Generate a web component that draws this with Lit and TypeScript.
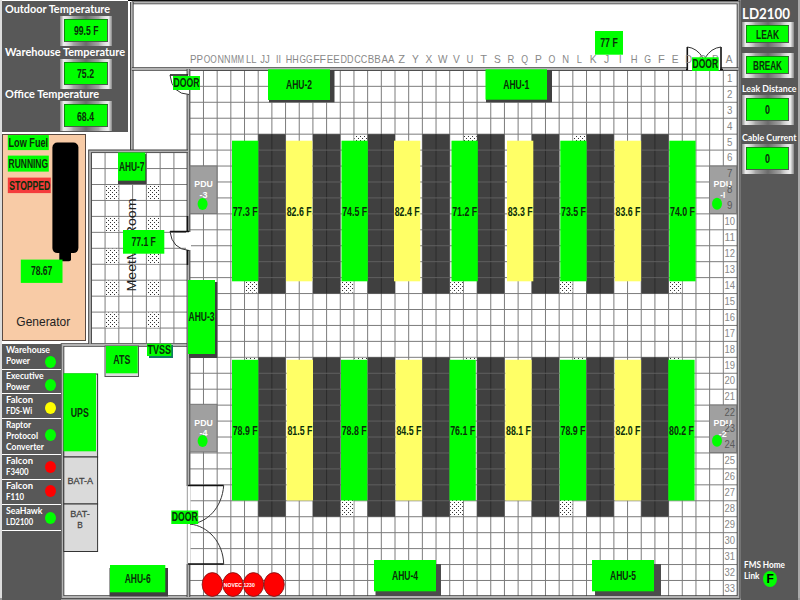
import { LitElement, html, svg, css } from "lit";
import { customElement } from "lit/decorators.js";

const GREEN = "#00ff00";
const YELLOW = "#ffff66";
const DARK = "#404040";

const PX = 13.68;
const PY = 15.94;
const X0 = 189.8;
const Y0 = 70.4;
const gx = (k: number) => X0 + k * PX;
const gy = (k: number) => Y0 + k * PY;
const range = (n: number) => Array.from({ length: n }, (_, i) => i);

const COLUMNS = "PP OO NN MM LL JJ II HH GG FF EE DD CC BB AA Z Y X W V U T S R Q P O N L K J I H G F E D C B A".split(" ");
const RACKS = [5, 9, 13, 17, 21, 25, 29, 33];

type Strip = [number, string];
const UPPER: Strip[] = [
  [232, "77.3 F"], [286, "82.6 F"], [341.5, "74.5 F"], [394, "82.4 F"], [451.5, "71.2 F"],
  [507, "83.3 F"], [560.3, "73.5 F"], [614.8, "83.6 F"], [669.3, "74.0 F"],
];
const LOWER: Strip[] = [
  [232, "78.9 F"], [286.7, "81.5 F"], [341, "78.8 F"], [395.7, "84.5 F"], [449.5, "76.1 F"],
  [505.3, "88.1 F"], [559.8, "78.9 F"], [614.8, "82.0 F"], [668.3, "80.2 F"],
];

/** Text squeezed or stretched to a given width. */
const fitted = (t: string, x: number, y: number, w: number, size: number, cls = "b", anchor = "middle") =>
  svg`<text class=${cls} x=${x} y=${y} font-size=${size} text-anchor=${anchor} textLength=${w} lengthAdjust="spacingAndGlyphs">${t}</text>`;

const box = (x1: number, y1: number, x2: number, y2: number, fill: string, stroke = "none") =>
  svg`<rect x=${x1} y=${y1} width=${x2 - x1} height=${y2 - y1} fill=${fill} stroke=${stroke}></rect>`;

const tag = (x1: number, y1: number, x2: number, y2: number, t: string, w: number, size = 12) =>
  svg`${box(x1, y1, x2, y2, GREEN)}${fitted(t, (x1 + x2) / 2, (y1 + y2) / 2 + 4.2, w, size)}`;

const wall = (d: string) => svg`<path class="wall-o" d=${d}></path><path class="wall-i" d=${d}></path>`;

const dots = (k: number, y1: number, y2: number) => box(gx(k) + 0.5, y1, gx(k + 1) - 0.5, y2, "url(#dots)");

const strips = (list: Strip[], y1: number, y2: number, ty: number) =>
  list.map(([x, t], i) => svg`${box(x, y1, x + 26.3, y2, i % 2 ? YELLOW : GREEN)}${fitted(t, x + 13.2, ty, 25, 12)}`);

const racks = (r1: number, r2: number) => RACKS.map((k) => svg`
  ${box(gx(k), gy(r1), gx(k + 2), gy(r2), DARK)}
  <path d="M${gx(k + 1)} ${gy(r1)}V${gy(r2)}" stroke="#2b2b2b"></path>
  ${range(r2 - r1 - 1).map((r) => svg`<path d="M${gx(k)} ${gy(r1 + r + 1)}h${PX * 2}" stroke="#636363" stroke-width=".9"></path>`)}`);

const pdu = (x1: number, y1: number, tx: number, n: string, cx: number, cy: number) => svg`
  ${box(x1, y1, x1 + 27, y1 + 47.6, "#a0a0a0", "#777")}
  ${fitted("PDU", tx, y1 + 21.3, 18.5, 9.6, "w")}
  ${fitted(n, tx, y1 + 31.8, n === "-I" ? 5 : 8, 9.6, "w")}
  <ellipse cx=${cx} cy=${cy} rx="5" ry="6" fill=${GREEN}></ellipse>`;

/** Single line of fitted text that takes part in the flow of a panel. */
const line = (t: string, w: number, h: number, size: number, cls = "panel-text") => html`
  <svg class="line" width=${w} height=${h}>${fitted(t, 0, h - 3, w, size, cls, "start")}</svg>`;

const STATUS: [string[], number[], string, number, number][] = [
  [["Warehouse", "Power"], [44, 24], GREEN, 26, 355],
  [["Executive", "Power"], [37.5, 24], GREEN, 24, 378],
  [["Falcon", "FDS-Wi"], [27, 26], "#ffff00", 25, 401],
  [["Raptor", "Protocol", "Converter"], [25, 32, 38], GREEN, 36, 428],
  [["Falcon", "F3400"], [27, 22.5], "#ff0000", 25, 460],
  [["Falcon", "F110"], [27, 18], "#ff0000", 25, 484.5],
  [["SeaHawk", "LD2100"], [36.5, 27], GREEN, 26, 511],
];
const rowTop = (i: number) => 343 + STATUS.slice(0, i).reduce((s, r) => s + r[3], 0);

@customElement("value-frame")
class ValueFrame extends LitElement {
  static properties = { text: {}, w: { type: Number } };
  declare text: string;
  declare w: number;
  static styles = css`
    :host { display: flex; width: 52px; height: 30px; box-sizing: border-box; padding: 3px 4.5px 4px 4px;
      background: linear-gradient(90deg, #888 0, #eee 7%, #fff0 26%, #fff0 74%, #eee 93%, #888 100%),
        linear-gradient(90deg, #e4e4e4, #6c6c6c 50%, #e4e4e4); }
    .face { flex: 1; display: flex; align-items: center; justify-content: center; background: #00ff00;
      border: 1px solid #0a8b0a; border-right-color: #4a5a4a; border-bottom-color: #4a5a4a; }
    svg { display: block; overflow: visible; }
    text { font: bold 12px "Liberation Sans", Arial, sans-serif; fill: #0a2e0a; }
  `;
  render() {
    return html`<div class="face"><svg width=${this.w} height="12">
      <text x="0" y="10.6" textLength=${this.w} lengthAdjust="spacingAndGlyphs">${this.text}</text></svg></div>`;
  }
}

@customElement("app-root")
class AppRoot extends LitElement {
  static styles = css`
    :host { display: block; position: relative; width: 800px; height: 600px; overflow: hidden; background: #fff;
      font-family: "Liberation Sans", Arial, sans-serif; }
    .map { position: absolute; inset: 0; display: block; }
    .grid { stroke: #7c7c7c; stroke-width: 1; fill: none; }
    .b { font-family: "Liberation Sans", Arial, sans-serif; font-weight: bold; fill: #0a2e0a; }
    .w { font-family: "Liberation Sans", Arial, sans-serif; font-weight: bold; fill: #fff; }
    .g { font-family: "Liberation Sans", Arial, sans-serif; fill: #888; }
    .gd { font-family: "Liberation Sans", Arial, sans-serif; fill: #5a5a5a; }
    .n { font-family: "Liberation Sans", Arial, sans-serif; fill: #222; }
    .bat { font-family: "Liberation Sans", Arial, sans-serif; fill: #444; stroke: #444; stroke-width: .3; }
    .panel-text { font-family: Lato, "Open Sans", sans-serif; font-weight: bold; fill: #fff; }
    .wall-o { fill: none; stroke: #3c3c3c; stroke-width: 3.6; }
    .wall-i { fill: none; stroke: #b4b4b4; stroke-width: 1.8; }
    .door { fill: none; stroke: #333; stroke-width: 1; }
    .leaf { fill: none; stroke: #111; stroke-width: 1.6; }
    .layout { position: relative; display: flex; justify-content: space-between; width: 800px; height: 600px; }
    .left { width: 127px; padding: 1px 0 0 2px; display: flex; flex-direction: column; align-items: flex-start; }
    .line { display: block; overflow: visible; flex: none; }
    .temps { width: 126px; height: 131px; box-sizing: border-box; background: #585858; padding: .6px 0 0 3px; }
    .temps value-frame { margin-left: 55px; }
    .temps value-frame:not(:last-child) { margin-bottom: -1.1px; }
    .gen { width: 84px; height: 207px; margin-top: 1.5px; box-sizing: border-box; background: #f8cba6; border: 1.5px solid #5a4a42; }
    .gen svg { display: block; overflow: visible; margin: -1px 0 0 -1px; }
    .status { width: 59px; height: 256px; margin-top: 3px; background: #585858; }
    .row { display: flex; box-sizing: border-box; border-bottom: 1.6px solid #fff; padding: 1.3px 0 0 4px; position: relative; }
    .lamp { position: absolute; left: 43px; width: 11px; height: 12px; border-radius: 50%; }
    .right { width: 57px; margin-right: 2px; background: #585858; display: flex; flex-direction: column; align-items: flex-start; padding: 0 0 0 .6px; box-sizing: border-box; }
    .right value-frame.low { height: 25px; }
    .home { margin: auto 0 18px 2px; }
    .home-link { display: flex; align-items: flex-start; gap: 4px; height: 11px; }
    .badge { width: 14px; height: 16px; border-radius: 50%; background: #00ff00; display: flex; align-items: center;
      justify-content: center; font: bold 12px "Liberation Sans", Arial, sans-serif; color: #000; }
    .gap { height: 6px; flex: none; }
  `;

  floor() {
    return svg`
      <defs>
        <pattern id="dots" width="4" height="4" patternUnits="userSpaceOnUse">
          <rect width="4" height="4" fill="#fff"></rect>
          <rect x="0" y="0" width="1" height="1" fill="#333"></rect>
          <rect x="2" y="2" width="1" height="1" fill="#333"></rect>
        </pattern>
      </defs>
      <rect width="800" height="600" fill="#fff"></rect>
      ${box(128, 0, 800, 1, "#000")}
      ${box(738, 0, 800, 600, "#8c8c8c")}
      ${box(0, 0, 2, 600, "#ddd")}
      ${box(798, 0, 800, 600, "#aaa")}
      ${box(0, 598, 800, 600, "#999")}
      <path class="grid" d=${range(40).map((k) => `M${gx(k)} 70V597`).join("")}></path>
      <path class="grid" d=${range(33).map((k) => `M190 ${gy(k)}H737`).join("")}></path>
      <path class="grid" d=${range(8).map((k) => `M${91.3 + k * 13.77} 152V343`).join("")}></path>
      <path class="grid" d=${range(12).map((k) => `M91 ${152.6 + k * 15.95}H188`).join("")}></path>
      ${[105.07, 146.4].map((x) => range(5).map((r) => box(x + 0.5, 185 + r * 31.9, x + 13.3, 200 + r * 31.9, "url(#dots)")))}

      ${[12, 20, 28].map((k) => dots(k, gy(4) + 1, 142))}
      ${[4, 11, 19, 27, 35].map((k) => dots(k, 280, gy(14) - 1))}
      ${[4, 12, 20, 28, 35].map((k) => dots(k, gy(18) + 0.5, 361))}
      ${[11, 19, 27].map((k) => dots(k, 500, gy(28) - 1))}
      ${racks(4, 14)}${racks(18, 28)}
      ${strips(UPPER, 140.7, 281.3, 215.7)}
      ${strips(LOWER, 359.8, 500.5, 434.5)}

      ${wall("M131.8 2.5H738.5V597H62.5V345H189")}
      ${wall("M131.8 2V150")}
      ${wall("M131.8 69H738.5")}
      ${wall("M188.4 69V597")}
      ${wall("M90 343.8V151.3H188")}
      ${box(186, 75.5, 189, 94.5, "#fff")}
      ${box(186, 232, 191, 250, "#fff")}
      ${box(186, 486, 190.5, 564, "#fff")}
      <path d="M187.3 486V564" stroke="#999"></path>
      ${box(688, 66, 720.5, 70, "#fff")}

      <path class="leaf" d="M170 75H188M170 231.5H189M188 485.5H223.7M188 564H223.7M687.3 47V70M721 47V70M686 69.5h2M720 69.5h3"></path>
      <path class="door" d="M170 75Q172 94 189 94.5M170 231.5Q172 249 189 250.5M223.7 485.5C222 508 207 523 190 524C208 526 223 542 223.7 564M687.3 47Q697 48 703 58M721 47Q711 48 705 58"></path>
      <path class="leaf" d="M187.5 216V232M187.5 250V265"></path>

      ${COLUMNS.map((c, i) => {
        const x = 196.6 + i * 13.67 - (i > 37 ? 0.6 : 0);
        return c.length === 2
          ? fitted(c, x, 63, c === "II" ? 5 : c === "JJ" ? 9.5 : c === "LL" ? 10.5 : 13, 11.6, "g")
          : fitted(c, x, 63, c === "I" ? 2.6 : c === "W" ? 9.5 : c === "J" || c === "L" ? 5.2 : 6.8, 11.6, "g");
      })}

      ${pdu(190, 166, 203.6, "-3", 202.6, 204)}
      ${pdu(190, 404.3, 203.6, "-4", 202.6, 441)}
      ${pdu(709.5, 166, 722.8, "-I", 717, 203.7)}
      ${pdu(709.5, 405, 722.8, "-2", 717, 440.7)}
      ${range(33).map((i) => fitted(String(i + 1), 729.8, 81.8 + i * 15.93, i < 9 ? 5.4 : 10.5, 11.8, [6, 7, 8, 21, 22, 23].includes(i) ? "gd" : "g"))}

      ${box(269, 70, 334.5, 102.3, DARK)}${tag(268, 69.3, 330, 100, "AHU-2", 26)}
      ${box(486, 70, 552, 102.3, DARK)}${tag(485.5, 69.3, 547, 99.7, "AHU-1", 26)}
      ${box(189, 282, 217.3, 358, DARK)}${tag(188, 280, 215, 354, "AHU-3", 26)}
      ${box(375.5, 564, 441, 596, "#4c4c4c")}${tag(374, 560, 436, 591.3, "AHU-4", 26)}
      ${box(595, 564, 661, 596, "#4c4c4c")}${tag(592, 560, 654, 591.3, "AHU-5", 26)}
      ${box(118, 154, 146.3, 184, DARK)}${tag(118, 152.5, 145.3, 180.7, "AHU-7", 25.5)}
      ${box(109.5, 568, 168, 596.5, DARK)}${tag(110, 565, 165.3, 592.3, "AHU-6", 26)}
      ${tag(595, 31, 623, 54.7, "77 F", 17.5)}

      ${box(105, 346, 138.5, 376.5, "#ddd", "#555")}${tag(106, 346, 137.7, 373.3, "ATS", 17)}
      ${box(149, 345, 173, 358, "#137a63")}${tag(147, 343.7, 171.3, 356, "TVSS", 23.5)}
      ${box(63.8, 374, 97.6, 457, "#dadada", "#333")}${tag(63.5, 373.3, 96, 451.3, "UPS", 18)}
      ${box(63.8, 457, 97.6, 504, "#dadada", "#333")}
      ${box(63.8, 504, 97.6, 551.5, "#dadada", "#333")}
      ${fitted("BAT-A", 80.3, 483.6, 25.5, 9.8, "bat")}
      ${fitted("BAT-", 80, 517.3, 19.5, 9.8, "bat")}
      ${fitted("B", 80, 528, 5.5, 9.8, "bat")}

      <text class="n" font-size="13.5" textLength="93" lengthAdjust="spacingAndGlyphs" transform="translate(135.6 291.5) rotate(-90)">MeetMe Room</text>
      ${tag(123, 230, 164.3, 253.7, "77.1 F", 24.5)}
      ${tag(173, 76, 200, 90, "DOOR", 26)}
      ${tag(171.3, 510.5, 198.2, 524, "DOOR", 26)}
      ${tag(692, 57.3, 718.7, 71, "DOOR", 25.5)}

      ${[212.3, 232.9, 253.5, 274.1].map((x) => svg`<ellipse cx=${x} cy="584.5" rx="10.2" ry="11.9" fill="#f00" stroke="#7a1010" stroke-width=".8"></ellipse>`)}
      ${fitted("NOVEC 1230", 239.3, 586.8, 31, 6.2, "w")}`;
  }

  render() {
    return html`
      <svg class="map" width="800" height="600">${this.floor()}</svg>
      <div class="layout">
        <div class="left">
          <section class="temps">
            ${line("Outdoor Temperature", 105, 14, 12)}
            <value-frame text="99.5 F" w="24.5"></value-frame>
            ${line("Warehouse Temperature", 120, 14, 12)}
            <value-frame text="75.2" w="17"></value-frame>
            ${line("Office Temperature", 94, 14, 12)}
            <value-frame text="68.4" w="17"></value-frame>
          </section>
          <section class="gen">
            <svg width="82" height="204" viewBox="2.2 133.4 82 204">
              ${tag(8, 134.5, 49, 149.5, "Low Fuel", 39.5)}
              ${tag(8, 155, 49, 171, "RUNNING", 39.5)}
              ${box(8, 177, 51, 192.5, "#f43c3c")}
              ${svg`<text class="b" x="9.5" y="189" font-size="12" textLength="41" lengthAdjust="spacingAndGlyphs">STOPPED</text>
              <rect x="52.6" y="142" width="26" height="110.5" rx="5" fill="#000"></rect>
              <rect x="59.5" y="248" width="11.7" height="12.6" rx="2" fill="#000"></rect>`}
              ${tag(21, 259, 62.7, 282.3, "78.67", 21.5)}
              ${fitted("Generator", 43.5, 325.2, 54, 13, "n")}
            </svg>
          </section>
          <section class="status">
            ${STATUS.map(([words, widths, color, h, lamp], i) => html`
              <div class="row" style="height:${h}px">
                <div>${words.map((t, j) => line(t, widths[j], 11.3, 10.3))}</div>
                <span class="lamp" style="background:${color};top:${lamp - rowTop(i)}px"></span>
              </div>`)}
          </section>
        </div>
        <div class="right">
          ${line("LD2100", 48, 22, 15.5)}
          <value-frame class="low" text="LEAK" w="23"></value-frame>
          <div class="gap"></div>
          <value-frame class="low" text="BREAK" w="29"></value-frame>
          ${line("Leak Distance", 54.5, 16.5, 10)}
          <value-frame text="0" w="5"></value-frame>
          ${line("Cable Current", 54.5, 19, 10)}
          <value-frame text="0" w="5"></value-frame>
          <div class="home">
            ${line("FMS Home", 41, 11, 9.8)}
            <div class="home-link">${line("Link", 15.5, 11, 9.8)}<span class="badge">F</span></div>
          </div>
        </div>
      </div>`;
  }
}
